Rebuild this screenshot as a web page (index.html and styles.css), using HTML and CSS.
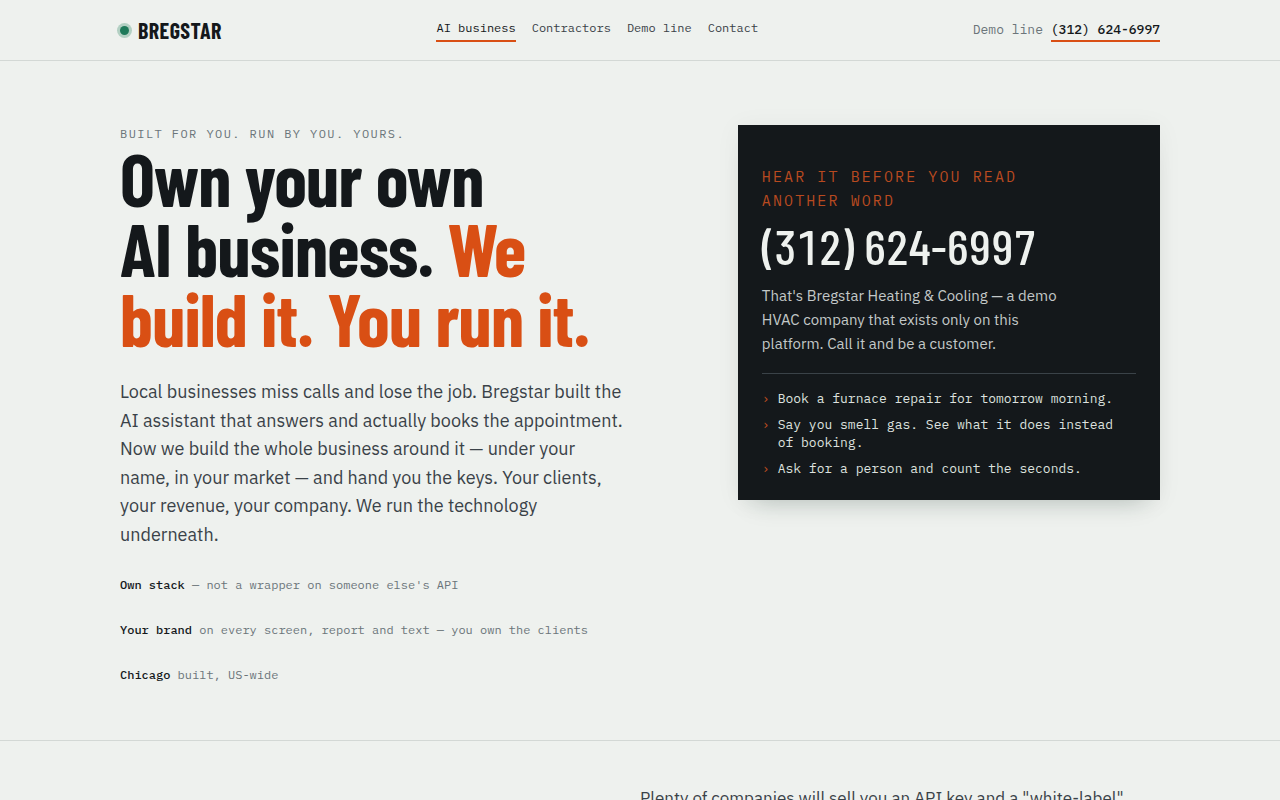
FILE: index.html
```html
<!DOCTYPE html>
<html lang="en">
<head>
    <meta charset="UTF-8">
    <meta name="viewport" content="width=device-width, initial-scale=1.0">
    <title>Bregstar — Own your own AI business</title>
    <link rel="stylesheet" href="styles.css">
</head>
<body>
    <header class="site-header">
        <div class="wrap header-row">
            <a class="brand" href="#"><span class="brand-dot"></span>BREGSTAR</a>
            <nav class="nav" aria-label="Main">
                <a class="active" href="#">AI business</a>
                <a href="#contractors">Contractors</a>
                <a href="#demo">Demo line</a>
                <a href="#contact">Contact</a>
            </nav>
            <div class="header-phone">Demo line <a href="tel:+13126246997">(312) 624-6997</a></div>
        </div>
    </header>

    <main>
        <section class="hero">
            <div class="wrap hero-grid">
                <div class="hero-copy">
                    <p class="eyebrow">Built for you. Run by you. Yours.</p>
                    <h1>Own your own<br>AI business. <em>We<br>build it. You run it.</em></h1>
                    <p class="lead">Local businesses miss calls and lose the job. Bregstar built the AI assistant that answers and actually books the appointment. Now we build the whole business around it — under your name, in your market — and hand you the keys. Your clients, your revenue, your company. We run the technology underneath.</p>
                    <ul class="facts">
                        <li><strong>Own stack</strong> — not a wrapper on someone else's API</li>
                        <li><strong>Your brand</strong> on every screen, report and text — you own the clients</li>
                        <li><strong>Chicago</strong> built, US-wide</li>
                    </ul>
                </div>

                <!-- Demo line card -->
                <aside class="call-card" id="demo">
                    <p class="call-label">Hear it before you read another word</p>
                    <a class="call-number" href="tel:+13126246997">(312) 624-6997</a>
                    <p class="call-note">That's Bregstar Heating &amp; Cooling — a demo HVAC company that exists only on this platform. Call it and be a customer.</p>
                    <ul class="call-list">
                        <li>Book a furnace repair for tomorrow morning.</li>
                        <li>Say you smell gas. See what it does instead of booking.</li>
                        <li>Ask for a person and count the seconds.</li>
                    </ul>
                </aside>
            </div>
        </section>

        <section class="pitch">
            <div class="wrap pitch-grid">
                <p>Plenty of companies will sell you an API key and a "white-label"</p>
            </div>
        </section>
    </main>
</body>
</html>
```
FILE: styles.css
```css
:root {
    --paper: #eef1ee;
    --ink: #14181b;
    --text: #3a4248;
    --muted: #6b757a;
    --line: #d3d8d5;
    --accent: #d94f14;
    --green: #1f7a5a;
    --display: "Barlow Condensed", "Roboto Condensed", Roboto, sans-serif;
    --sans: "IBM Plex Sans", Roboto, "Liberation Sans", sans-serif;
    --mono: "IBM Plex Mono", "Liberation Mono", monospace;
}

* {
    box-sizing: border-box;
}

html {
    overflow: hidden;
}

body {
    height: 100vh;
    margin: 0;
    overflow: hidden;
    background: var(--paper);
    color: var(--ink);
    font-family: var(--sans);
}

h1, p, ul {
    margin: 0;
    padding: 0;
}

ul {
    list-style: none;
}

a {
    color: inherit;
    text-decoration: none;
}

.wrap {
    max-width: 1088px;
    margin: 0 auto;
    padding: 0 24px;
}

/* Header */
.site-header {
    border-bottom: 1px solid var(--line);
}

.header-row {
    display: flex;
    align-items: center;
    justify-content: space-between;
    height: 60px;
}

.brand {
    display: flex;
    align-items: center;
    gap: 9px;
    font: bold 22px/26px var(--display);
    letter-spacing: 0.02em;
}

.brand-dot {
    width: 9px;
    height: 9px;
    border-radius: 50%;
    background: var(--green);
    box-shadow: 0 0 0 3px #b3d0c3;
}

.nav {
    display: flex;
    gap: 16px;
    font: 12px/16px var(--mono);
    color: var(--text);
}

.nav a {
    padding: 2px 0 4px;
    border-bottom: 2px solid transparent;
}

.nav .active {
    color: var(--ink);
    border-color: var(--accent);
}

.header-phone {
    font: 13px/18px var(--mono);
    color: var(--muted);
}

.header-phone a {
    padding-bottom: 2px;
    border-bottom: 2px solid var(--accent);
    color: var(--ink);
    font-weight: 500;
}

/* Hero */
.hero {
    padding: 64px 0 56px;
    border-bottom: 1px solid var(--line);
}

.hero-grid {
    display: grid;
    grid-template-columns: 1.35fr 1fr;
    align-items: start;
    gap: 48px;
}

.eyebrow {
    font: 12px/18px var(--mono);
    letter-spacing: 0.12em;
    text-transform: uppercase;
    color: var(--muted);
}

h1 {
    margin: 0 0 25px;
    font: 700 74px/70px var(--display);
    letter-spacing: -0.01em;
}

h1 em {
    font-style: normal;
    color: var(--accent);
}

.lead {
    max-width: 506px;
    font-size: 18px;
    line-height: 1.59;
    color: var(--text);
}

.facts {
    display: grid;
    gap: 27px;
    margin-top: 26px;
    font: 12px/18px var(--mono);
    color: var(--muted);
}

.facts strong {
    color: var(--ink);
    font-weight: 500;
}

/* Demo card */
.call-card {
    padding: 40px 24px 22px;
    background: var(--ink);
    color: var(--paper);
    box-shadow: 0 16px 24px -16px rgba(20, 50, 40, 0.25), 0 2px 24px rgba(20, 24, 27, 0.05);
}

.call-label {
    max-width: 300px;
    font: 15px/24px var(--mono);
    letter-spacing: 0.14em;
    text-transform: uppercase;
    color: #b84a20;
}

.call-number {
    display: block;
    margin: 4px 0 9px;
    font: 500 49px/58px var(--display);
    font-variant-numeric: tabular-nums;
}

.call-note {
    max-width: 304px;
    font-size: 15px;
    line-height: 24px;
    color: #c3c8c8;
}

.call-list {
    display: grid;
    gap: 8px;
    margin-top: 17px;
    padding-top: 16px;
    border-top: 1px solid #3a4248;
    font: 13px/18px var(--mono);
    color: #dde1df;
}

.call-list li {
    display: flex;
    gap: 8px;
}

.call-list li::before {
    content: "›";
    color: #b84a20;
}

/* Pitch */
.pitch {
    padding: 44px 0;
}

.pitch-grid {
    display: grid;
    grid-template-columns: 1fr 1fr;
}

.pitch-grid p {
    grid-column: 2;
    font-size: 17px;
    line-height: 27px;
    color: var(--text);
}
```
